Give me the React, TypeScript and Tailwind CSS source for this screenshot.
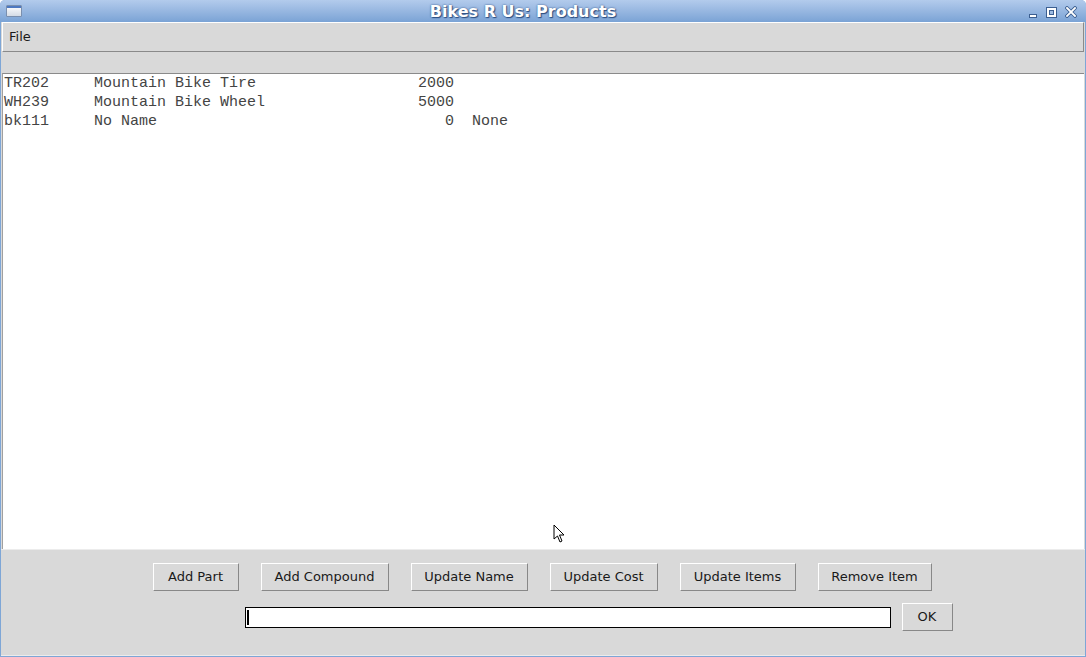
import React from "react";

const rows = [
  "TR202     Mountain Bike Tire                  2000",
  "WH239     Mountain Bike Wheel                 5000",
  "bk111     No Name                                0  None",
];

// Raised Tk-style button
const TkButton = ({ label, className }: { label: string; className?: string }) => (
  <button
    className={`h-[28px] bg-[#d9d9d9] border border-t-white border-l-white border-b-[#888888] border-r-[#888888] text-[13px] text-[#1a1a1a] ${className ?? "px-[16px]"}`}
    style={{ fontFamily: '"DejaVu Sans", sans-serif' }}
  >
    {label}
  </button>
);

export default function App() {
  return (
    <div
      className="w-[1086px] h-[657px] flex flex-col bg-[#7ea6d6] rounded-t-[5px] overflow-hidden"
      style={{ fontFamily: '"DejaVu Sans", sans-serif' }}
    >
      {/* title bar */}
      <div className="h-[22px] shrink-0 flex items-center bg-gradient-to-b from-[#b3cbec] to-[#7ba3d5] pl-[6px] pr-[9px]">
        <div className="w-[16px] h-[12px] rounded-[1px] border border-[#7a8fae] bg-gradient-to-b from-white to-[#d4dbe6] flex flex-col">
          <div className="h-[2px] bg-[#4d78c0]" />
        </div>
        <div
          className="flex-1 text-center text-white font-bold text-[16px] pr-[4px] mt-[2px]"
          style={{ textShadow: "0 0 2px #2a4d80, 1px 1px 1px #2a4d80" }}
        >
          Bikes R Us: Products
        </div>
        <div className="flex items-center gap-[8px] mt-[2px]">
          <svg width="10" height="11" viewBox="0 0 10 11">
            <rect x="1" y="7" width="8" height="4" fill="#3c5f91" />
            <rect x="2" y="8" width="6" height="2" fill="white" />
          </svg>
          <svg width="11" height="11" viewBox="0 0 11 11">
            <rect x="0" y="0" width="11" height="11" fill="#3c5f91" />
            <rect x="1" y="1" width="9" height="9" fill="white" />
            <rect x="3" y="3" width="5" height="5" fill="#3c5f91" />
            <rect x="4" y="4" width="3" height="3" fill="#9dbbe2" />
          </svg>
          <svg width="12" height="12" viewBox="0 0 12 12">
            <path d="M2 2 L10 10 M10 2 L2 10" stroke="#3c5f91" strokeWidth="3.6" strokeLinecap="square" />
            <path d="M2 2 L10 10 M10 2 L2 10" stroke="white" strokeWidth="1.8" strokeLinecap="square" />
          </svg>
        </div>
      </div>

      {/* window body */}
      <div className="flex-1 flex flex-col mx-[1px] mb-[1px] bg-[#d9d9d9] relative">
        {/* menu bar */}
        <div className="h-[30px] shrink-0 flex items-center border border-t-white border-l-white border-b-[#8a8a8a] border-r-[#8a8a8a] mx-[1px] pl-[6px] text-[13px] text-[#1a1a1a]">
          File
        </div>
        <div className="h-[21px] shrink-0" />

        {/* list */}
        <div
          className="h-[476px] shrink-0 bg-white border-t border-l border-t-[#8a8a8a] border-l-[#a0a0a0] ml-[1px] mr-[1px] pl-[1px] text-[15px] leading-[19px] text-[#444444] whitespace-pre"
          style={{ fontFamily: '"Liberation Mono", "Courier New", monospace' }}
        >
          {rows.map((r) => (
            <div key={r}>{r}</div>
          ))}
        </div>

        {/* controls */}
        <div className="flex-1 flex flex-col items-center border-t border-[#ececec]">
          <div className="flex gap-[22px] mt-[13px] mr-[2px]">
            <TkButton label="Add Part" className="w-[86px]" />
            <TkButton label="Add Compound" className="w-[128px]" />
            <TkButton label="Update Name" className="w-[117px]" />
            <TkButton label="Update Cost" className="w-[108px]" />
            <TkButton label="Update Items" className="w-[116px]" />
            <TkButton label="Remove Item" className="w-[114px]" />
          </div>
          <div className="flex items-center mt-[12px] ml-[111px]">
            <div className="w-[646px] h-[21px] bg-white border border-black flex items-center pl-[1px]">
              <div className="w-[2px] h-[15px] bg-black" />
            </div>
            <TkButton label="OK" className="w-[51px] ml-[11px]" />
          </div>
        </div>
        <div className="h-[1px] bg-[#ececec]" />

        {/* mouse pointer */}
        <svg className="absolute left-[552px] top-[502px]" width="14" height="20" viewBox="0 0 14 20">
          <path d="M1 1 L1 15 L4.5 12 L7 18 L9 17 L6.5 11 L11 11 Z" fill="white" stroke="black" strokeWidth="1" strokeLinejoin="round" />
        </svg>
      </div>
    </div>
  );
}
